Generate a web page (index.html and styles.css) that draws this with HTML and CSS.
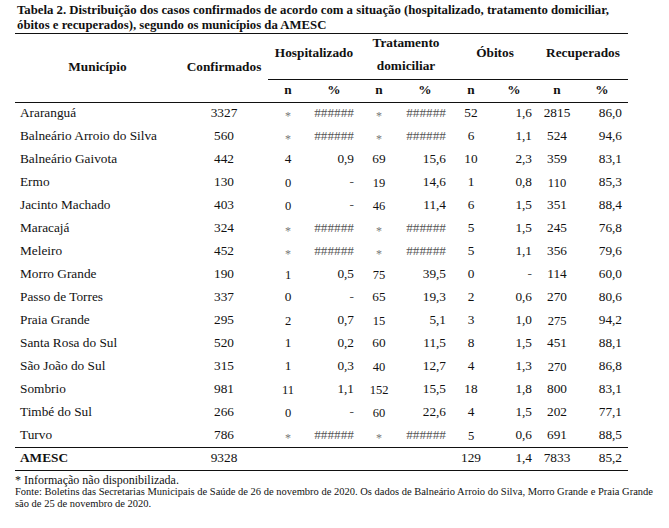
FILE: index.html
```html
<!DOCTYPE html>
<html lang="pt">
<head>
<meta charset="utf-8">
<title>Tabela 2</title>
<link rel="stylesheet" href="styles.css">
</head>
<body>
<p class="title">Tabela 2. Distribuição dos casos confirmados de acordo com a situação (hospitalizado, tratamento domiciliar,<br>óbitos e recuperados), segundo os municípios da AMESC</p>
<table class="tab">
  <colgroup>
    <col class="w-mun"><col class="w-conf">
    <col class="w-hn"><col class="w-hp">
    <col class="w-tn"><col class="w-tp">
    <col class="w-on"><col class="w-op">
    <col class="w-rn"><col class="w-rp">
  </colgroup>
  <thead>
    <tr class="h1">
      <th rowspan="2" class="span2">Município</th>
      <th rowspan="2" class="span2">Confirmados</th>
      <th colspan="2" class="grp">Hospitalizado</th>
      <th colspan="2" class="grp two"><div class="two-in">Tratamento<br>domiciliar</div></th>
      <th colspan="2" class="grp">Óbitos</th>
      <th colspan="2" class="grp">Recuperados</th>
    </tr>
    <tr class="h2">
      <th>n</th><th>%</th><th>n</th><th>%</th><th>n</th><th>%</th><th>n</th><th>%</th>
    </tr>
  </thead>
  <tbody>
    <tr><td class="m">Araranguá</td><td class="c">3327</td><td class="c"><span class="ast">*</span></td><td class="r"><span class="hash">######</span></td><td class="c"><span class="ast">*</span></td><td class="r"><span class="hash">######</span></td><td class="c">52</td><td class="r">1,6</td><td class="c">2815</td><td class="r">86,0</td></tr>
    <tr><td class="m">Balneário Arroio do Silva</td><td class="c">560</td><td class="c"><span class="ast">*</span></td><td class="r"><span class="hash">######</span></td><td class="c"><span class="ast">*</span></td><td class="r"><span class="hash">######</span></td><td class="c">6</td><td class="r">1,1</td><td class="c">524</td><td class="r">94,6</td></tr>
    <tr><td class="m">Balneário Gaivota</td><td class="c">442</td><td class="c">4</td><td class="r">0,9</td><td class="c">69</td><td class="r">15,6</td><td class="c">10</td><td class="r">2,3</td><td class="c">359</td><td class="r">83,1</td></tr>
    <tr><td class="m">Ermo</td><td class="c">130</td><td class="c"><span class="lo">0</span></td><td class="r"><span class="dash">-</span></td><td class="c"><span class="lo">19</span></td><td class="r">14,6</td><td class="c">1</td><td class="r">0,8</td><td class="c"><span class="lo">110</span></td><td class="r">85,3</td></tr>
    <tr><td class="m">Jacinto Machado</td><td class="c">403</td><td class="c"><span class="lo">0</span></td><td class="r"><span class="dash">-</span></td><td class="c"><span class="lo">46</span></td><td class="r">11,4</td><td class="c">6</td><td class="r">1,5</td><td class="c">351</td><td class="r">88,4</td></tr>
    <tr><td class="m">Maracajá</td><td class="c">324</td><td class="c"><span class="ast">*</span></td><td class="r"><span class="hash">######</span></td><td class="c"><span class="ast">*</span></td><td class="r"><span class="hash">######</span></td><td class="c">5</td><td class="r">1,5</td><td class="c">245</td><td class="r">76,8</td></tr>
    <tr><td class="m">Meleiro</td><td class="c">452</td><td class="c"><span class="ast">*</span></td><td class="r"><span class="hash">######</span></td><td class="c"><span class="ast">*</span></td><td class="r"><span class="hash">######</span></td><td class="c">5</td><td class="r">1,1</td><td class="c">356</td><td class="r">79,6</td></tr>
    <tr><td class="m">Morro Grande</td><td class="c">190</td><td class="c"><span class="lo">1</span></td><td class="r">0,5</td><td class="c"><span class="lo">75</span></td><td class="r">39,5</td><td class="c">0</td><td class="r"><span class="dash">-</span></td><td class="c">114</td><td class="r">60,0</td></tr>
    <tr><td class="m">Passo de Torres</td><td class="c">337</td><td class="c">0</td><td class="r"><span class="dash">-</span></td><td class="c">65</td><td class="r">19,3</td><td class="c">2</td><td class="r">0,6</td><td class="c">270</td><td class="r">80,6</td></tr>
    <tr><td class="m">Praia Grande</td><td class="c">295</td><td class="c"><span class="lo">2</span></td><td class="r">0,7</td><td class="c"><span class="lo">15</span></td><td class="r">5,1</td><td class="c">3</td><td class="r">1,0</td><td class="c"><span class="lo">275</span></td><td class="r">94,2</td></tr>
    <tr><td class="m">Santa Rosa do Sul</td><td class="c">520</td><td class="c">1</td><td class="r">0,2</td><td class="c">60</td><td class="r">11,5</td><td class="c">8</td><td class="r">1,5</td><td class="c">451</td><td class="r">88,1</td></tr>
    <tr><td class="m">São João do Sul</td><td class="c">315</td><td class="c">1</td><td class="r">0,3</td><td class="c"><span class="lo">40</span></td><td class="r">12,7</td><td class="c">4</td><td class="r">1,3</td><td class="c"><span class="lo">270</span></td><td class="r">86,8</td></tr>
    <tr><td class="m">Sombrio</td><td class="c">981</td><td class="c"><span class="lo">11</span></td><td class="r">1,1</td><td class="c"><span class="lo">152</span></td><td class="r">15,5</td><td class="c">18</td><td class="r">1,8</td><td class="c">800</td><td class="r">83,1</td></tr>
    <tr><td class="m">Timbé do Sul</td><td class="c">266</td><td class="c"><span class="lo">0</span></td><td class="r"><span class="dash">-</span></td><td class="c"><span class="lo">60</span></td><td class="r">22,6</td><td class="c">4</td><td class="r">1,5</td><td class="c">202</td><td class="r">77,1</td></tr>
    <tr><td class="m">Turvo</td><td class="c">786</td><td class="c"><span class="ast">*</span></td><td class="r"><span class="hash">######</span></td><td class="c"><span class="ast">*</span></td><td class="r"><span class="hash">######</span></td><td class="c"><span class="lo">5</span></td><td class="r">0,6</td><td class="c">691</td><td class="r">88,5</td></tr>
    <tr class="total"><td class="m"><b>AMESC</b></td><td class="c">9328</td><td></td><td></td><td></td><td></td><td class="c">129</td><td class="r">1,4</td><td class="c">7833</td><td class="r">85,2</td></tr>
  </tbody>
</table>
<div class="notes">
  <p class="note1">* Informação não disponibilizada.</p>
  <p class="note2">Fonte: Boletins das Secretarias Municipais de Saúde de 26 de novembro de 2020. Os dados de Balneário Arroio do Silva, Morro Grande e Praia Grande<br>são de 25 de novembro de 2020.</p>
</div>
</body>
</html>
```
FILE: styles.css
```css
html, body {
  margin: 0;
  padding: 0;
  background: #ffffff;
}
body {
  font-family: "Liberation Serif", "Times New Roman", serif;
  color: #111;
}
.title {
  margin: 3px 0 0 17px;
  font-weight: bold;
  font-size: 12.75px;
  line-height: 15px;
  white-space: nowrap;
}
.tab {
  margin-left: 15px;
  width: 613px;
  table-layout: fixed;
  border-collapse: collapse;
  border-top: 1.5px solid #111;
  font-size: 13.3px;
}
.w-mun { width: 165px; }
.w-conf { width: 88px; }
.w-hn { width: 40px; }
.w-hp { width: 52px; }
.w-tn { width: 38px; }
.w-tp { width: 54px; }
.w-on { width: 38px; }
.w-op { width: 48px; }
.w-rn { width: 38px; }
.w-rp { width: 52px; }

th {
  font-weight: bold;
  padding: 0;
  text-align: center;
}
.h1 th {
  height: 46px;
  vertical-align: middle;
  padding-bottom: 8px;
  box-sizing: border-box;
  line-height: 15px;
}
.h1 th.span2 {
  padding-bottom: 3px;
  border-bottom: 1.5px solid #111;
}
.h1 th.grp {
  border-bottom: 1.5px solid #111;
}
.h1 th.two {
  vertical-align: top;
  padding: 0;
}
.two-in {
  line-height: 23px;
  margin-top: -3px;
}
.h2 th {
  height: 23px;
  padding-bottom: 3px;
  box-sizing: border-box;
  border-bottom: 1.5px solid #111;
}
td {
  padding: 0 0 2px 0;
  height: 23px;
  box-sizing: border-box;
  vertical-align: middle;
  white-space: nowrap;
}
td.m { padding-left: 5px; text-align: left; }
td.c { text-align: center; }
td.r { text-align: right; padding-right: 6px; }
.total td {
  border-top: 1.5px solid #111;
  border-bottom: 1.5px solid #111;
}
.ast {
  color: #777;
  font-size: 12px;
  position: relative;
  top: 3px;
}
.hash {
  color: #555;
}
.dash {
  color: #555;
}
.lo {
  font-size: 12.5px;
  vertical-align: -2px;
}
.notes {
  margin: 3px 0 0 15px;
}
.notes p {
  margin: 0;
}
.note1 {
  font-size: 12px;
  line-height: 12px;
}
.note2 {
  font-size: 10.5px;
  line-height: 12px;
  white-space: nowrap;
}
```
